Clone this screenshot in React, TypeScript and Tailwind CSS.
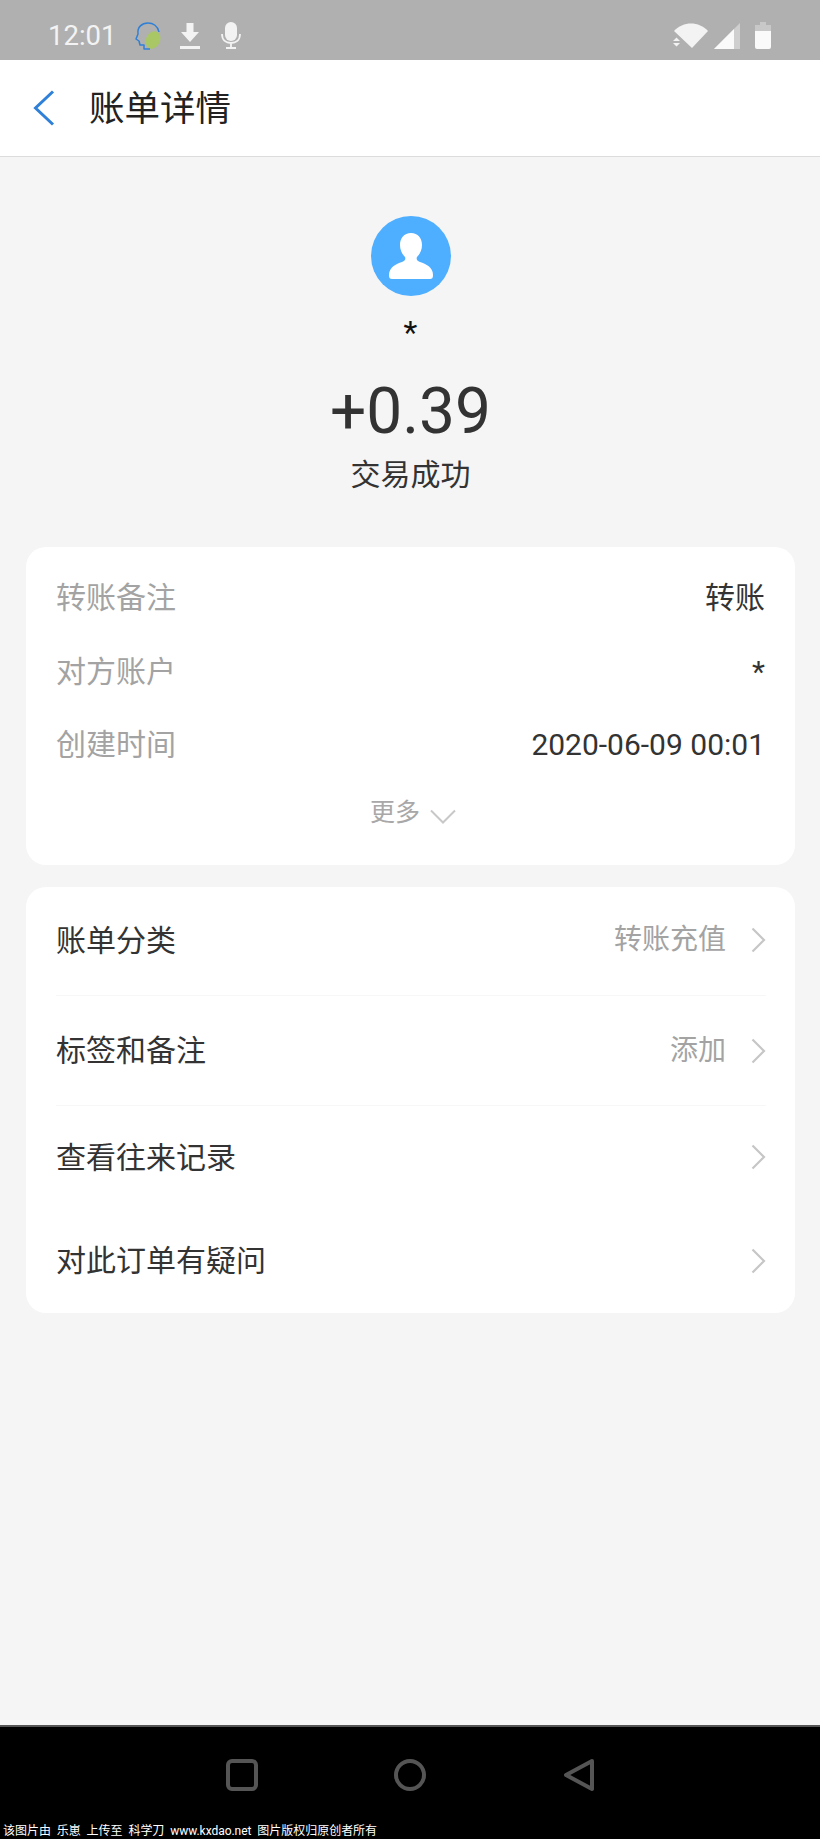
const CJK = "font-['Roboto','Noto_Sans_CJK_SC',sans-serif]";

const DETAILS = [
  { label: "转账备注", value: "转账", className: "h-[73px]" },
  { label: "对方账户", value: "*", className: "h-[74px]" },
  { label: "创建时间", value: "2020-06-09 00:01", className: "h-[73px]" },
];

const ACTIONS = [
  { label: "账单分类", value: "转账充值", className: "h-[109px] border-b border-[#f7f7f7] pb-[2px]" },
  { label: "标签和备注", value: "添加", className: "h-[110px] border-b border-[#f7f7f7]" },
  { label: "查看往来记录", value: "", className: "h-[104px] pb-[2px]" },
  { label: "对此订单有疑问", value: "", className: "h-[103px] pb-[2px]" },
];

function StatusBar() {
  return (
    <div className="flex h-[60px] items-center bg-[#b0b0b0] pl-[48px] pr-[49px] pt-[11px] text-[#f3f3f3]">
      <span className="text-[27.500px] leading-none">12:01</span>
      {/* assistant head */}
      <svg className="ml-[19px]" width="27" height="28" viewBox="0 0 27 28" fill="none">
        <ellipse cx="18" cy="18" rx="7" ry="9" fill="#a9c765" transform="rotate(25 18 18)" />
        <path
          d="M15 27H9V23H5L4 19 1 17 3 12C2 5 7 1 13 1c5 0 10 3 11 9"
          stroke="#2f7fd6"
          strokeWidth="1.500"
          strokeLinejoin="round"
        />
      </svg>
      {/* download */}
      <svg className="ml-[18px]" width="20" height="26" viewBox="0 0 20 26" fill="#f3f3f3">
        <path d="M6.500 0h7v9H19l-9 10L1 9h5.500z" />
        <rect x="0" y="23" width="20" height="3" />
      </svg>
      {/* mic */}
      <svg className="ml-[21px]" width="20" height="27" viewBox="0 0 20 27" fill="none">
        <rect x="4" y="0" width="12" height="19" rx="6" fill="#f3f3f3" />
        <path d="M1 12c0 6 4 9 9 9s9-3 9-9M10 21v5M5 26h10" stroke="#f3f3f3" strokeWidth="1.800" />
      </svg>
      <div className="ml-auto flex items-center">
        {/* wifi with activity arrows */}
        <svg width="36" height="26" viewBox="0 0 36 26" fill="#f3f3f3">
          <path d="M1 8c9-10 25-10 34 0L19 25z" />
          <path d="M0 18l3.500-3.500L7 18zM0 20h7l-3.500 3.500z" />
        </svg>
        {/* signal */}
        <svg className="ml-[5px]" width="26" height="26" viewBox="0 0 26 26">
          <path d="M0 26L26 0v26z" fill="#cfcfcf" />
          <path d="M0 26L20 6v20z" fill="#fafafa" />
        </svg>
        {/* battery */}
        <svg className="ml-[15px]" width="16" height="27" viewBox="0 0 16 27">
          <path d="M5 0h6v3h5v6H0V3h5z" fill="#c8c8c8" />
          <path d="M0 9h16v16a2 2 0 0 1-2 2H2a2 2 0 0 1-2-2z" fill="#fafafa" />
        </svg>
      </div>
    </div>
  );
}

function Header() {
  return (
    <header className="flex h-[97px] items-center border-b border-[#dcdcdc] bg-white">
      <svg className="ml-[33px]" width="22" height="36" viewBox="0 0 22 36" fill="none">
        <path d="M20 1.500L2.500 18 20 34.500" stroke="#2f80d8" strokeWidth="3" />
      </svg>
      <h1 className="ml-[34px] mt-[3px] text-[35.500px] leading-none font-normal text-[#222]">账单详情</h1>
    </header>
  );
}

function Row({ label, value, className }: { label: string; value: string; className: string }) {
  return (
    <div className={`flex items-center ${className}`}>
      <span className="text-[30px] text-[#333]">{label}</span>
      <span className="ml-auto text-[28px] text-[#a3a3a3]">{value}</span>
      <svg className="ml-[25px]" width="15" height="26" viewBox="0 0 15 26" fill="none">
        <path d="M1.500 1.500L13 13 1.500 24.500" stroke="#c6c6c6" strokeWidth="2.200" />
      </svg>
    </div>
  );
}

function NavBar() {
  return (
    <div className="relative h-[114px] border-t-2 border-[#555] bg-black">
      <div className="flex h-[94px] items-center justify-center gap-[136px] pt-[2px]">
        <div className="h-[32px] w-[32px] rounded-[6px] border-[4px] border-[#555]" />
        <div className="h-[32px] w-[32px] rounded-full border-[4px] border-[#555]" />
        <svg className="ml-[1px]" width="32" height="34" viewBox="0 0 32 34" fill="none">
          <path d="M29 3L3 17l26 14z" stroke="#555" strokeWidth="4" strokeLinejoin="round" />
        </svg>
      </div>
      <p className="absolute bottom-0 left-[3px] whitespace-pre text-[12px] leading-[15px] tracking-[-0.03px] text-white">
        {"该图片由  乐崽  上传至  科学刀  www.kxdao.net  图片版权归原创者所有"}
      </p>
    </div>
  );
}

export default function App() {
  return (
    <div className={`flex h-[1839px] w-[820px] flex-col bg-[#f5f5f5] ${CJK}`}>
      <StatusBar />
      <Header />

      <main className="flex-1 pl-[26px] pr-[25px]">
        <section className="flex flex-col items-center pt-[59px]">
          <div className="flex h-[80px] w-[80px] items-center justify-center rounded-full bg-[#4eaeff]">
            <svg width="48" height="48" viewBox="0 0 48 48" fill="white">
              <path d="M24 1c7 0 11 5 11 12 0 5-2 9-5 12-1 2 0 4 3 5 6 2 13 5 13 13 0 3-1 4-3 4H5c-2 0-3-1-3-4 0-8 7-11 13-13 3-1 4-3 3-5-3-3-5-7-5-12C13 6 17 1 24 1z" />
            </svg>
          </div>
          <p className="mt-[14px] text-[32px] leading-[44px] text-[#111]">*</p>
          <p className="mt-[21px] text-[64px] leading-[74px] text-[#333]">+0.39</p>
          <p className="mt-[6px] text-[30px] leading-[40px] text-[#333]">交易成功</p>
        </section>

        <section className="mt-[52px] rounded-[20px] bg-white pl-[30px] pr-[30px] pt-[14px]">
          {DETAILS.map((item) => (
            <div key={item.label} className={`flex items-center justify-between ${item.className}`}>
              <span className="text-[30px] text-[#a3a3a3]">{item.label}</span>
              <span className="text-[30px] text-[#333]">{item.value}</span>
            </div>
          ))}
          <div className="flex h-[84px] items-center justify-center pb-[20px] pl-[5px]">
            <span className="text-[25px] text-[#a8a8a8]">更多</span>
            <svg className="ml-[10px] mt-[8px]" width="26" height="16" viewBox="0 0 26 16" fill="none">
              <path d="M1 1.500l12 12 12-12" stroke="#c8c8c8" strokeWidth="2" />
            </svg>
          </div>
        </section>

        <section className="mt-[22px] rounded-[20px] bg-white pl-[30px] pr-[29px]">
          {ACTIONS.map((item) => (
            <Row key={item.label} {...item} />
          ))}
        </section>
      </main>

      <NavBar />
    </div>
  );
}
